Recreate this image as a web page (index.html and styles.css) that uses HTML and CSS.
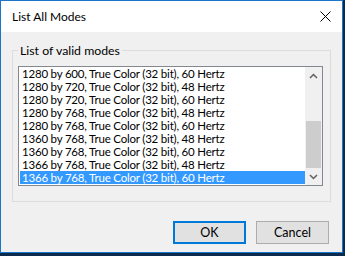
FILE: index.html
```html
<!DOCTYPE html>
<html>
<head>
<meta charset="utf-8">
<link rel="stylesheet" href="styles.css">
</head>
<body>
<div class="window">
  <div class="titlebar">
    <span class="title">List All Modes</span>
    <svg class="close" width="11" height="11" viewBox="0 0 11 11"><path d="M0.5 0.5L10.5 10.5M10.5 0.5L0.5 10.5" stroke="#000" stroke-width="1" fill="none"/></svg>
  </div>
  <div class="content">
    <div class="group">
      <div class="group-label">List of valid modes</div>
      <div class="listbox">
        <div class="rows">
          <div class="row">1280 by 600, True Color (32 bit), 60 Hertz</div>
          <div class="row">1280 by 720, True Color (32 bit), 48 Hertz</div>
          <div class="row">1280 by 720, True Color (32 bit), 60 Hertz</div>
          <div class="row">1280 by 768, True Color (32 bit), 48 Hertz</div>
          <div class="row">1280 by 768, True Color (32 bit), 60 Hertz</div>
          <div class="row">1360 by 768, True Color (32 bit), 48 Hertz</div>
          <div class="row">1360 by 768, True Color (32 bit), 60 Hertz</div>
          <div class="row">1366 by 768, True Color (32 bit), 48 Hertz</div>
          <div class="row selected">1366 by 768, True Color (32 bit), 60 Hertz</div>
        </div>
        <div class="scrollbar">
          <div class="arrow"><svg width="9" height="6" viewBox="0 0 9 6"><path d="M1 5L4.5 1.5L8 5" stroke="#606060" stroke-width="1.5" fill="none"/></svg></div>
          <div class="track"><div class="thumb"></div></div>
          <div class="arrow"><svg width="9" height="6" viewBox="0 0 9 6"><path d="M1 1L4.5 4.5L8 1" stroke="#606060" stroke-width="1.5" fill="none"/></svg></div>
        </div>
      </div>
    </div>
    <div class="buttons">
      <button class="btn default">OK</button>
      <button class="btn">Cancel</button>
    </div>
  </div>
</div>
</body>
</html>
```
FILE: styles.css
```css
html, body {
  margin: 0;
  padding: 0;
}
body {
  width: 345px;
  height: 256px;
  overflow: hidden;
  background: #0b2b4e;
  font-family: Lato, "Noto Sans", sans-serif;
  font-size: 12px;
  color: #000;
}
.window {
  width: 343px;
  height: 253px;
  box-sizing: border-box;
  border: 1px solid #1b76c9;
  background: #f0f0f0;
  display: flex;
  flex-direction: column;
}
.titlebar {
  height: 31px;
  flex: none;
  background: #fff;
  display: flex;
  align-items: center;
  justify-content: space-between;
  padding: 0 11px 0 11px;
}
.title {
  font-size: 12px;
  line-height: 16px;
}
.close {
  display: block;
}
.content {
  padding: 18px 0 0 11px;
  display: flex;
  flex-direction: column;
}
.group {
  width: 319px;
  height: 152px;
  box-sizing: border-box;
  border: 1px solid #dcdcdc;
  padding: 0 0 0 5px;
}
.group-label {
  width: fit-content;
  margin-top: -7px;
  padding: 0 2px;
  font-size: 12.3px;
  line-height: 14px;
  height: 14px;
  background: #f0f0f0;
}
.listbox {
  margin-top: 8px;
  width: 305px;
  height: 120px;
  box-sizing: border-box;
  border: 1px solid #828790;
  background: #fff;
  display: flex;
}
.rows {
  flex: 1;
  padding-left: 1px;
}
.row {
  height: 13px;
  line-height: 13px;
  padding-left: 2px;
  font-size: 11.5px;
  letter-spacing: -0.2px;
  white-space: nowrap;
}
.row.selected {
  background: #3399ff;
  color: #fff;
}
.scrollbar {
  width: 17px;
  flex: none;
  background: #f0f0f0;
  display: flex;
  flex-direction: column;
}
.arrow {
  height: 17px;
  flex: none;
  display: flex;
  align-items: center;
  justify-content: center;
}
.arrow svg {
  display: block;
}
.track {
  flex: 1;
}
.thumb {
  margin: 37px 1px 0 1px;
  height: 47px;
  background: #cdcdcd;
}
.buttons {
  margin-top: 19px;
  display: flex;
  justify-content: flex-end;
  gap: 10px;
  padding-right: 13px;
}
.btn {
  width: 73px;
  height: 23px;
  box-sizing: border-box;
  margin: 0;
  padding: 0;
  font-family: inherit;
  font-size: 12.5px;
  color: #000;
  background: #e1e1e1;
  border: 1px solid #adadad;
}
.btn.default {
  border: 2px solid #0078d7;
}
```
